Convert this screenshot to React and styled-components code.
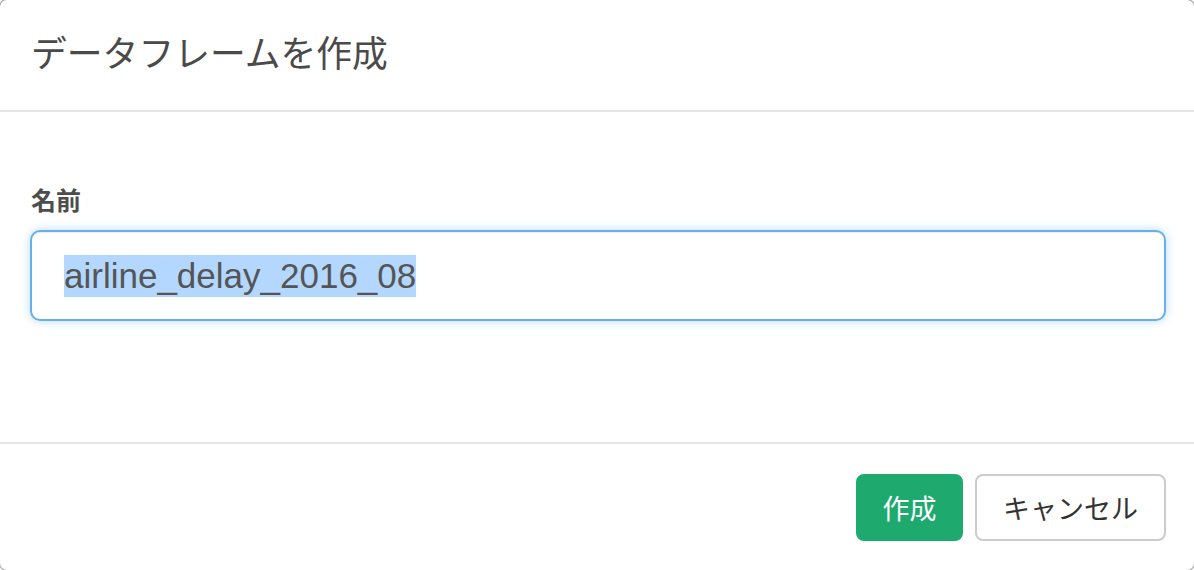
import React from 'react';
import styled, { createGlobalStyle } from 'styled-components';

const GlobalStyle = createGlobalStyle`
  html, body {
    margin: 0;
    padding: 0;
    background: #ffffff;
    overflow: hidden;
  }
  body {
    font-family: "Noto Sans CJK JP", "Liberation Sans", sans-serif;
  }
`;

const Modal = styled.div`
  box-sizing: border-box;
  width: 1196px;
  height: 572px;
  margin: -1px;
  background: #fff;
  border: 1px solid rgba(0, 0, 0, 0.35);
  border-radius: 8px;
  display: flex;
  flex-direction: column;
  overflow: hidden;
`;

const Header = styled.div`
  height: 110px;
  border-bottom: 2px solid #e5e5e5;
  display: flex;
  align-items: center;
  padding-left: 31px;
  flex-shrink: 0;
`;

const Title = styled.h4`
  margin: 0;
  font-size: 35.8px;
  font-weight: 400;
  color: #4a4a4a;
  line-height: 1;
  position: relative;
  top: -3px;
`;

const Body = styled.div`
  height: 332px;
  box-sizing: border-box;
  padding: 69px 28px 0 30px;
  border-bottom: 2px solid #e5e5e5;
  flex-shrink: 0;
`;

const Label = styled.label`
  display: block;
  font-size: 25px;
  font-weight: 700;
  color: #4d4d4d;
  line-height: 36px;
  margin-bottom: 13px;
  padding-left: 1px;
`;

const Field = styled.div`
  box-sizing: border-box;
  height: 91px;
  border: 2px solid #66afe9;
  border-radius: 10px;
  box-shadow: inset 0 1px 1px rgba(0, 0, 0, 0.075), 0 0 10px rgba(102, 175, 233, 0.45);
  display: flex;
  align-items: center;
  padding-left: 32px;
  font-family: "Liberation Sans", Arial, sans-serif;
  font-size: 35px;
  color: #555;
`;

const Selected = styled.span`
  background: #b3d7fe;
  line-height: 42px;
`;

const Footer = styled.div`
  flex: 1;
  display: flex;
  justify-content: flex-end;
  align-items: flex-start;
  gap: 12px;
  padding: 30px 28px 0 0;
`;

const Button = styled.button`
  box-sizing: border-box;
  height: 67px;
  padding: 0;
  border-radius: 8px;
  font-family: "Noto Sans CJK JP", sans-serif;
  font-size: 27px;
  white-space: nowrap;
  border: 2px solid ${(p) => (p.$primary ? '#1eaa6f' : '#cccccc')};
  background: ${(p) => (p.$primary ? '#1eaa6f' : '#ffffff')};
  color: ${(p) => (p.$primary ? '#ffffff' : '#333333')};
  width: ${(p) => p.$w}px;
  cursor: pointer;
`;

export default function App() {
  return (
    <>
      <GlobalStyle />
      <Modal>
        <Header>
          <Title>データフレームを作成</Title>
        </Header>
        <Body>
          <Label>名前</Label>
          <Field>
            <Selected>airline_delay_2016_08</Selected>
          </Field>
        </Body>
        <Footer>
          <Button $primary $w={107}>作成</Button>
          <Button $w={191}>キャンセル</Button>
        </Footer>
      </Modal>
    </>
  );
}
